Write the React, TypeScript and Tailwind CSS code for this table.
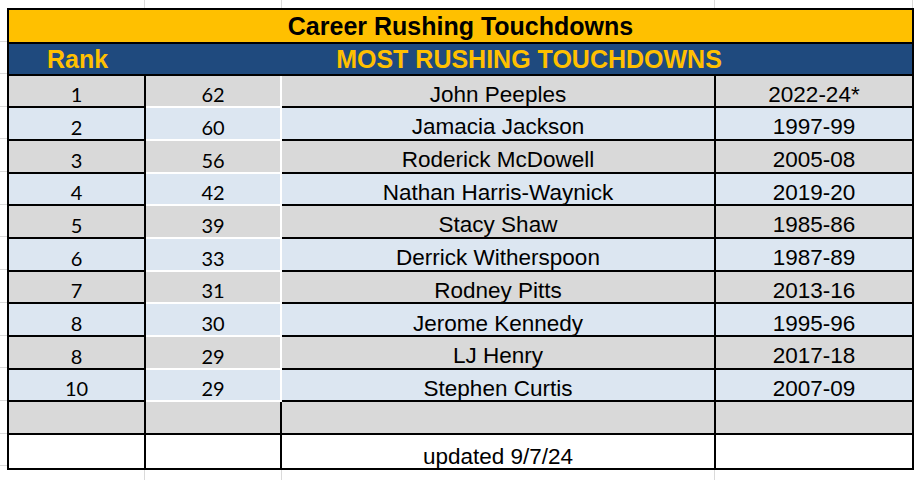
const rows = [
  ["1", "62", "John Peeples", "2022-24*"],
  ["2", "60", "Jamacia Jackson", "1997-99"],
  ["3", "56", "Roderick McDowell", "2005-08"],
  ["4", "42", "Nathan Harris-Waynick", "2019-20"],
  ["5", "39", "Stacy Shaw", "1985-86"],
  ["6", "33", "Derrick Witherspoon", "1987-89"],
  ["7", "31", "Rodney Pitts", "2013-16"],
  ["8", "30", "Jerome Kennedy", "1995-96"],
  ["8", "29", "LJ Henry", "2017-18"],
  ["10", "29", "Stephen Curtis", "2007-09"],
];

// spreadsheet cells sit their text near the bottom edge
const calibri = "items-end pb-[2px] font-['Lato','Open_Sans',sans-serif] text-[20px] leading-none";
const arial = "items-end pb-[0px] font-['Liberation_Sans',Arial,sans-serif] text-[22.5px] leading-none";

export default function App() {
  return (
    <div className="flex h-[480px] w-[918px] flex-col overflow-hidden bg-white text-black">
      {/* sheet gridlines above the table */}
      <div className="flex h-[8px] shrink-0">
        <div className="w-[145px] border-r border-[#dadada]" />
        <div className="w-[137px] border-r border-[#dadada]" />
        <div className="w-[433px] border-r border-[#dadada]" />
        <div className="w-[198px] border-r border-[#dadada]" />
        <div className="flex-1" />
      </div>

      <div className="flex shrink-0">
        {/* row gridlines on the left margin */}
        <div className="flex w-[7px] flex-col">
          <div className="h-[34px] border-b border-[#dadada]" />
          <div className="h-[32px] border-b border-[#dadada]" />
          {Array.from({ length: 12 }).map((_, i) => (
            <div key={i} className="h-[32.7px] border-b border-[#dadada]" />
          ))}
        </div>

        <div className="flex h-[462px] w-[907px] flex-col border-2 border-black">
          {/* title */}
          <div className="flex h-[33.5px] shrink-0 items-center justify-center border-b-2 border-black bg-[#ffc000] pt-[2px] font-['Liberation_Sans',Arial,sans-serif] text-[25px] font-bold leading-none">
            Career Rushing Touchdowns
          </div>

          {/* blue header */}
          <div className="flex h-[32px] shrink-0 border-b-2 border-black bg-[#1f4a7e] font-['Liberation_Sans',Arial,sans-serif] text-[25px] font-bold leading-none text-[#ffc000]">
            <div className="flex w-[137px] items-center justify-center pt-[2px]">Rank</div>
            <div className="flex flex-1 items-center justify-center pt-[2px]">MOST RUSHING TOUCHDOWNS</div>
          </div>

          {rows.map((r, i) => {
            const bg = i % 2 === 0 ? "bg-[#d9d9d9]" : "bg-[#dce6f1]";
            return (
              <div key={i} className={`flex h-[32.7px] shrink-0 ${bg}`}>
                <div className={`flex w-[137px] justify-center border-r-2 border-b-2 border-black ${calibri}`}>
                  {r[0]}
                </div>
                <div className={`flex w-[136px] justify-center border-r-2 border-b-2 border-white ${calibri}`}>
                  {r[1]}
                </div>
                <div className={`flex w-[434px] justify-center border-r-2 border-b-2 border-black ${arial}`}>
                  {r[2]}
                </div>
                <div className={`flex flex-1 justify-center border-b-2 border-black ${arial}`}>
                  {r[3]}
                </div>
              </div>
            );
          })}

          {/* blank grey row */}
          <div className="flex h-[32.7px] shrink-0 bg-[#d9d9d9]">
            <div className="w-[137px] border-r-2 border-b-2 border-black" />
            <div className="w-[136px] border-r-2 border-b-2 border-black" />
            <div className="w-[434px] border-r-2 border-b-2 border-black" />
            <div className="flex-1 border-b-2 border-black" />
          </div>

          {/* footer */}
          <div className="flex min-h-0 flex-1 bg-white">
            <div className="w-[137px] border-r-2 border-black" />
            <div className="w-[136px] border-r-2 border-black" />
            <div className={`flex w-[434px] justify-center border-r-2 border-black ${arial}`}>
              updated 9/7/24
            </div>
            <div className="flex-1" />
          </div>
        </div>
        <div className="flex-1" />
      </div>

      {/* sheet gridlines below the table */}
      <div className="flex flex-1">
        <div className="w-[145px] border-r border-[#dadada]" />
        <div className="w-[137px] border-r border-[#dadada]" />
        <div className="w-[433px] border-r border-[#dadada]" />
        <div className="flex-1" />
      </div>
    </div>
  );
}
